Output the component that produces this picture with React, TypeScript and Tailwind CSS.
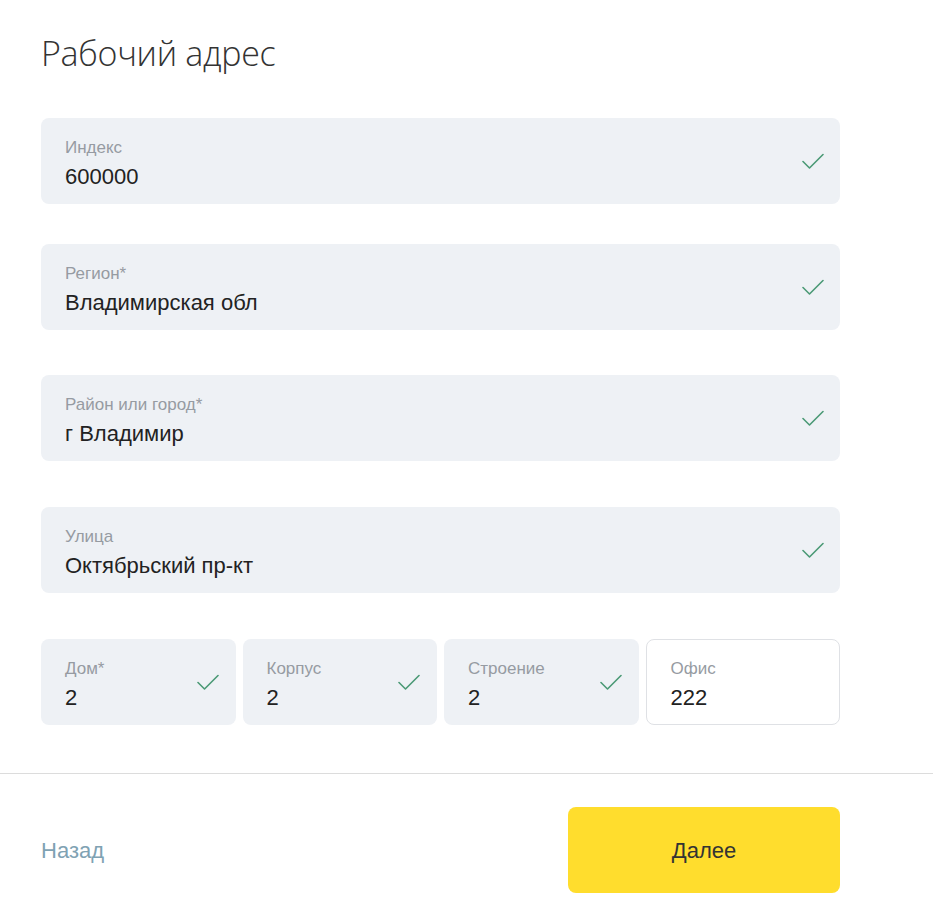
import React from "react";

const Check = () => (
  <svg width="22" height="16" viewBox="0 0 22 16" fill="none" className="shrink-0">
    <path d="M1 8.5l6.5 6.5L21 1.5" stroke="#4b9a76" strokeWidth="1.6" strokeLinecap="round" strokeLinejoin="round" />
  </svg>
);

type FieldProps = { label: string; value: string; valid?: boolean; className?: string };

function Field({ label, value, valid = true, className = "" }: FieldProps) {
  return (
    <div
      className={`flex items-center justify-between h-[86px] rounded-lg pl-6 pr-4 ${
        valid ? "bg-[#eef1f5]" : "bg-white border border-[#dfe1e5]"
      } ${className}`}
    >
      <div className="flex flex-col pt-[6px]">
        <span className="text-[17px] leading-[20px] text-[#969ba2]">{label}</span>
        <span className="text-[22px] leading-[26px] text-[#222] mt-[6px]">{value}</span>
      </div>
      {valid && <Check />}
    </div>
  );
}

export default function App() {
  return (
    <div className="min-h-screen w-[933px] bg-white font-['Liberation_Sans',Arial,sans-serif]">
      <div className="px-[41px] pt-[30px] w-[881px]">
        <h1 className="text-[34px] leading-[46px] font-light text-[#333] font-['Open_Sans',sans-serif] tracking-[-0.3px]">
          Рабочий адрес
        </h1>

        <div className="flex flex-col mt-[42px]">
          <Field label="Индекс" value="600000" />
          <Field label="Регион*" value="Владимирская обл" className="mt-[40px]" />
          <Field label="Район или город*" value="г Владимир" className="mt-[45px]" />
          <Field label="Улица" value="Октябрьский пр-кт" className="mt-[46px]" />
          <div className="grid grid-cols-4 gap-[7px] mt-[46px]">
            <Field label="Дом*" value="2" className="pr-[17px]" />
            <Field label="Корпус" value="2" className="pr-[17px]" />
            <Field label="Строение" value="2" className="pr-[17px]" />
            <Field label="Офис" value="222" valid={false} />
          </div>
        </div>
      </div>

      <div className="border-t border-[#dcdcdc] mt-[48px]" />

      <div className="flex items-center justify-between px-[41px] pt-[33px] w-[881px]">
        <button className="text-[22px] text-[#7fa2b3]">Назад</button>
        <button className="w-[272px] h-[86px] rounded-lg bg-[#ffdd2d] text-[22px] text-[#333]">
          Далее
        </button>
      </div>
    </div>
  );
}
